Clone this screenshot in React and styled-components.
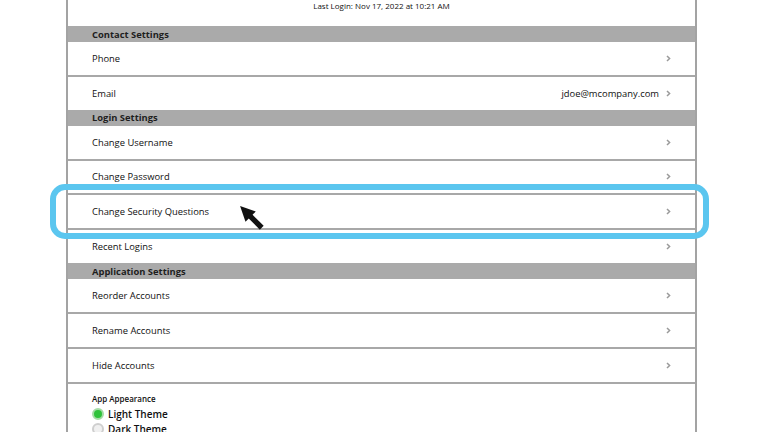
import React from 'react';
import styled, { createGlobalStyle } from 'styled-components';

const GlobalStyle = createGlobalStyle`
  html, body {
    margin: 0;
    padding: 0;
    background: #ffffff;
    font-family: 'Open Sans', 'Liberation Sans', sans-serif;
    color: #111;
  }
  #root {
    height: 432px;
    overflow: hidden;
    position: relative;
  }
`;

const Panel = styled.div`
  margin-left: 66px;
  width: 627px;
  min-height: 432px;
  border-left: 2px solid #a3a3a3;
  border-right: 2px solid #a3a3a3;
  background: #fff;
  display: flex;
  flex-direction: column;
`;

const Profile = styled.div`
  height: 26px;
  display: flex;
  flex-direction: column;
  align-items: center;
`;

const LastLogin = styled.div`
  font-size: 8px;
  line-height: 11px;
  color: #111;
`;

const SectionHeader = styled.div`
  height: 16px;
  flex-shrink: 0;
  background: #aaaaaa;
  display: flex;
  align-items: center;
  padding-left: 24px;
  font-size: 9.4px;
  font-weight: 700;
  color: #1e1e1e;
`;

const Row = styled.div`
  height: ${(p) => (p.$last ? 33 : 32.8)}px;
  flex-shrink: 0;
  display: flex;
  align-items: center;
  padding: 0 24px;
  border-bottom: ${(p) => (p.$last ? 'none' : '2px solid #a8a8a8')};
  font-size: 9.4px;
  color: #111;
`;

const Label = styled.span`
  flex: 1;
`;

const Value = styled.span`
  margin-right: 7px;
`;

const Chevron = () => (
  <svg width="5" height="7" viewBox="0 0 5 7">
    <path d="M1 1 L3.6 3.5 L1 6" fill="none" stroke="#9a9a9a" strokeWidth="1.5" />
  </svg>
);

const Appearance = styled.div`
  padding: 9px 24px 0;
  display: flex;
  flex-direction: column;
`;

const AppearanceTitle = styled.div`
  font-size: 8px;
  font-weight: 600;
  color: #111;
  margin-bottom: 3px;
`;

const Option = styled.label`
  display: flex;
  align-items: center;
  gap: 4px;
  height: 15px;
  font-size: 10px;
  font-weight: 600;
  color: #111;
`;

const Radio = styled.span`
  width: 12px;
  height: 12px;
  box-sizing: border-box;
  border-radius: 50%;
  border: 2px solid ${(p) => (p.$checked ? '#a5dca5' : '#cfcfcf')};
  background: ${(p) => (p.$checked ? '#2fc23a' : '#f0f0f0')};
`;

const Highlight = styled.div`
  position: absolute;
  left: 50px;
  top: 184px;
  width: 659px;
  height: 55px;
  box-sizing: border-box;
  border: 6px solid #5bc6ef;
  border-radius: 15px;
  pointer-events: none;
`;

const Pointer = styled.svg`
  position: absolute;
  left: 239px;
  top: 205px;
`;

const groups = [
  {
    title: 'Contact Settings',
    rows: [{ label: 'Phone' }, { label: 'Email', value: 'jdoe@mcompany.com' }],
  },
  {
    title: 'Login Settings',
    rows: [
      { label: 'Change Username' },
      { label: 'Change Password' },
      { label: 'Change Security Questions' },
      { label: 'Recent Logins' },
    ],
  },
  {
    title: 'Application Settings',
    rows: [
      { label: 'Reorder Accounts' },
      { label: 'Rename Accounts' },
      { label: 'Hide Accounts' },
    ],
  },
];

export default function App() {
  return (
    <>
      <GlobalStyle />
      <Panel>
        <Profile>
          <LastLogin>Last Login: Nov 17, 2022 at 10:21 AM</LastLogin>
        </Profile>
        {groups.map((g, gi) => (
          <React.Fragment key={g.title}>
            <SectionHeader>{g.title}</SectionHeader>
            {g.rows.map((r, i) => (
              <Row key={r.label} $last={gi < groups.length - 1 && i === g.rows.length - 1}>
                <Label>{r.label}</Label>
                {r.value && <Value>{r.value}</Value>}
                <Chevron />
              </Row>
            ))}
          </React.Fragment>
        ))}
        <Appearance>
          <AppearanceTitle>App Appearance</AppearanceTitle>
          <Option>
            <Radio $checked />
            Light Theme
          </Option>
          <Option>
            <Radio />
            Dark Theme
          </Option>
        </Appearance>
      </Panel>
      <Highlight />
      <Pointer width="26" height="26" viewBox="0 0 24 24">
        <polygon points="1,1 15.5,6 6,15.5" fill="#111" />
        <line x1="8" y1="8" x2="21" y2="21" stroke="#111" strokeWidth="5" strokeLinecap="butt" />
      </Pointer>
    </>
  );
}
